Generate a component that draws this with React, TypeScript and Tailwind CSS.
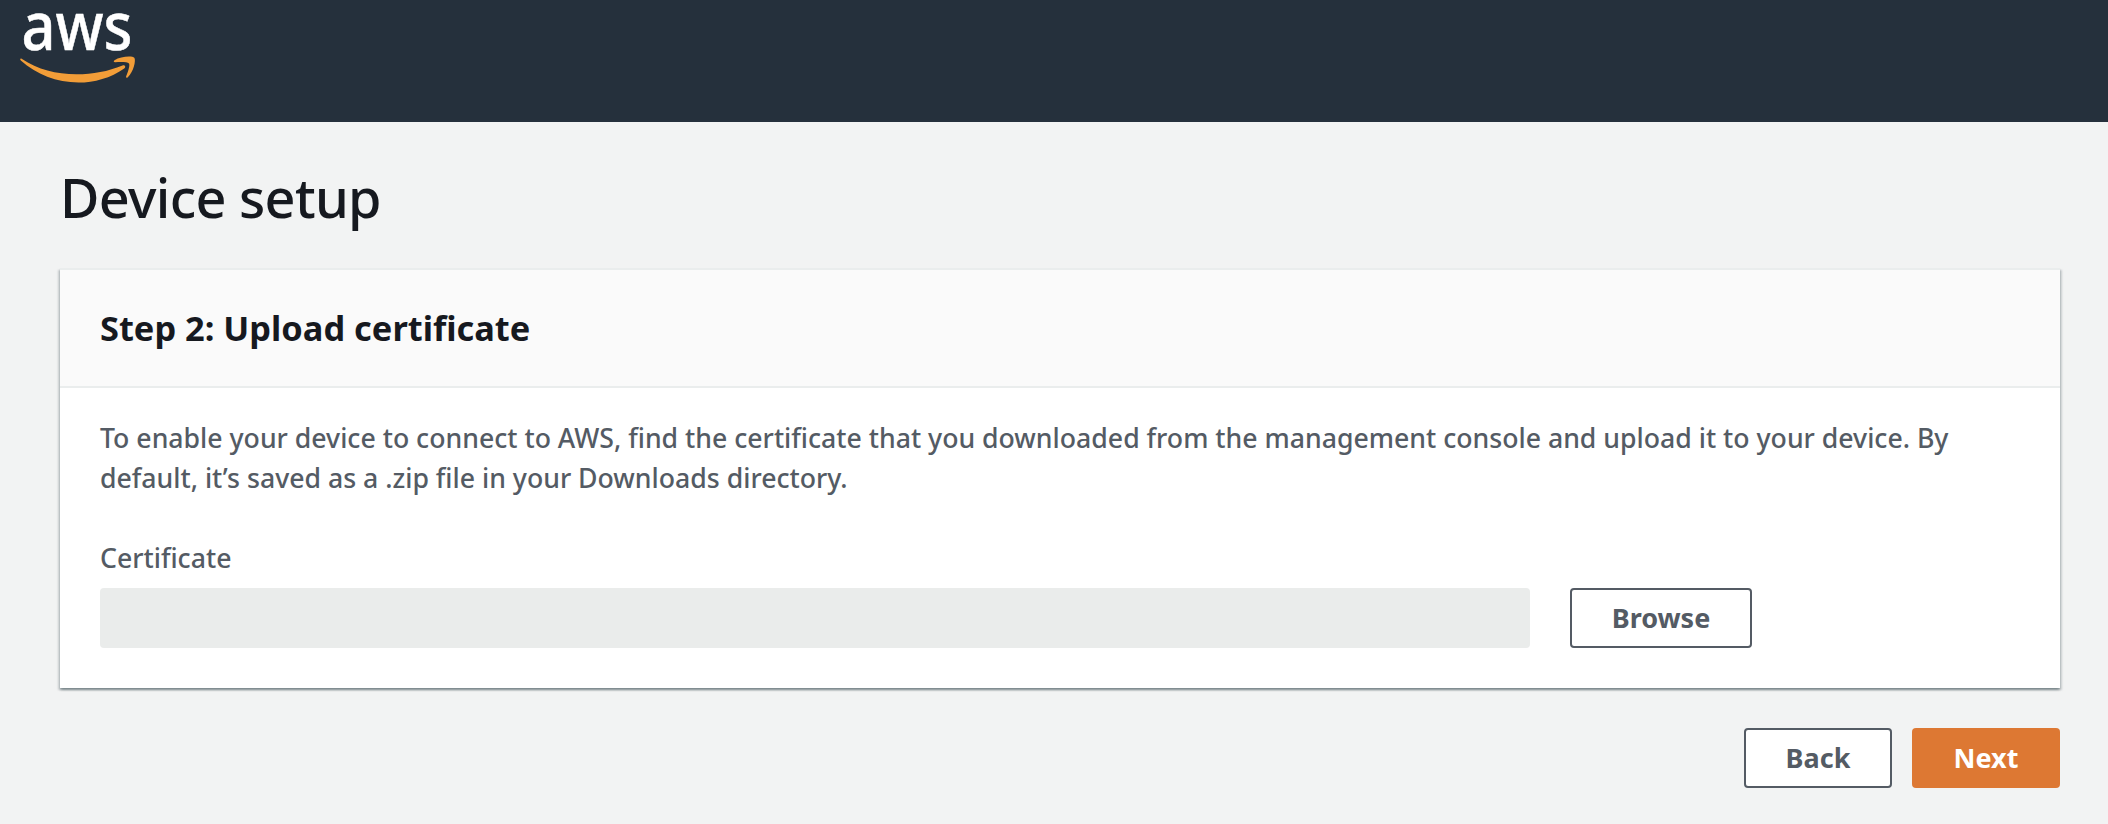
function Logo() {
  return (
    <svg width="120" height="86" viewBox="0 0 120 86" role="img" aria-label="aws">
      <text
        x="1.5"
        y="50"
        fill="#ffffff"
        fontFamily="'Noto Sans', sans-serif"
        fontSize="67"
        fontWeight="500"
        stroke="#ffffff"
        strokeWidth="0.5"
        textLength="111"
        lengthAdjust="spacingAndGlyphs"
      >
        aws
      </text>
      <g fill="#f29d38">
        <path d="M1.6 58.7 C18 69.5 36 74.2 56.500 74.200 C73 74.200 88 71.300 102.500 65.400 C104.900 64.500 106.300 66.900 104.200 68.500 C91 78 74 82.600 58.500 82.600 C36.500 82.600 16.500 74.500 .8 60.600 C-.4 59.400 .3 58 1.600 58.700 Z" />
        <path d="M94.500 60.200 C100.500 56.200 112.500 55.700 114.300 57.700 C116.200 60.200 113.500 72 107.800 77.200 C106.800 78.200 105.700 77.800 106.100 76.600 C107.500 73 110.300 65.500 109 63.500 C107.700 61.700 100.200 61.800 95.300 62.200 C93.500 62.300 93.300 61 94.500 60.200 Z" />
      </g>
    </svg>
  );
}

const outlineButton = "h-[60px] rounded-[4px] border-2 border-[#545b64] bg-white text-[27px] leading-[56px] font-bold text-[#545b64]";

export default function App() {
  return (
    <div className="min-h-screen bg-[#f2f3f3] font-['Noto_Sans',sans-serif] text-[#16191f]">
      <header className="h-[122px] bg-[#25303c] pl-5">
        <Logo />
      </header>

      <main className="pt-[43px] pr-12 pl-[60px]">
        <h1 className="text-[54px] leading-[64px] font-medium tracking-[-0.7px]">Device setup</h1>

        <section className="mt-[39px] border-t-2 border-[#eaeded] bg-white shadow-[0_2px_2px_0_rgba(0,28,36,0.3),2px_2px_2px_0_rgba(0,28,36,0.15),-2px_2px_2px_0_rgba(0,28,36,0.15)]">
          <div className="flex h-[118px] items-center border-b-2 border-[#eaeded] bg-[#fafafa] px-10">
            <h2 className="text-[34.4px] leading-10 font-bold">Step 2: Upload certificate</h2>
          </div>
          <div className="px-10 pt-[30px] pb-10 text-[26.67px] leading-10 font-medium text-[#545b64]">
            <p className="max-w-[1880px]">
              To enable your device to connect to AWS, find the certificate that you downloaded from the management
              console and upload it to your device. By default, it’s saved as a .zip file in your Downloads directory.
            </p>
            <label htmlFor="certificate" className="mt-10 block">
              Certificate
            </label>
            <div className="mt-2.5 flex gap-10">
              <input id="certificate" disabled className="h-[60px] w-[1430px] rounded-[4px] bg-[#eaeceb]" />
              <button className={`${outlineButton} w-[182px]`}>Browse</button>
            </div>
          </div>
        </section>

        <div className="mt-10 flex justify-end gap-5">
          <button className={`${outlineButton} w-[148px]`}>Back</button>
          <button className="h-[60px] w-[148px] rounded-[4px] bg-[#dd7833] text-[27px] leading-[60px] font-bold text-white">
            Next
          </button>
        </div>
      </main>
    </div>
  );
}
